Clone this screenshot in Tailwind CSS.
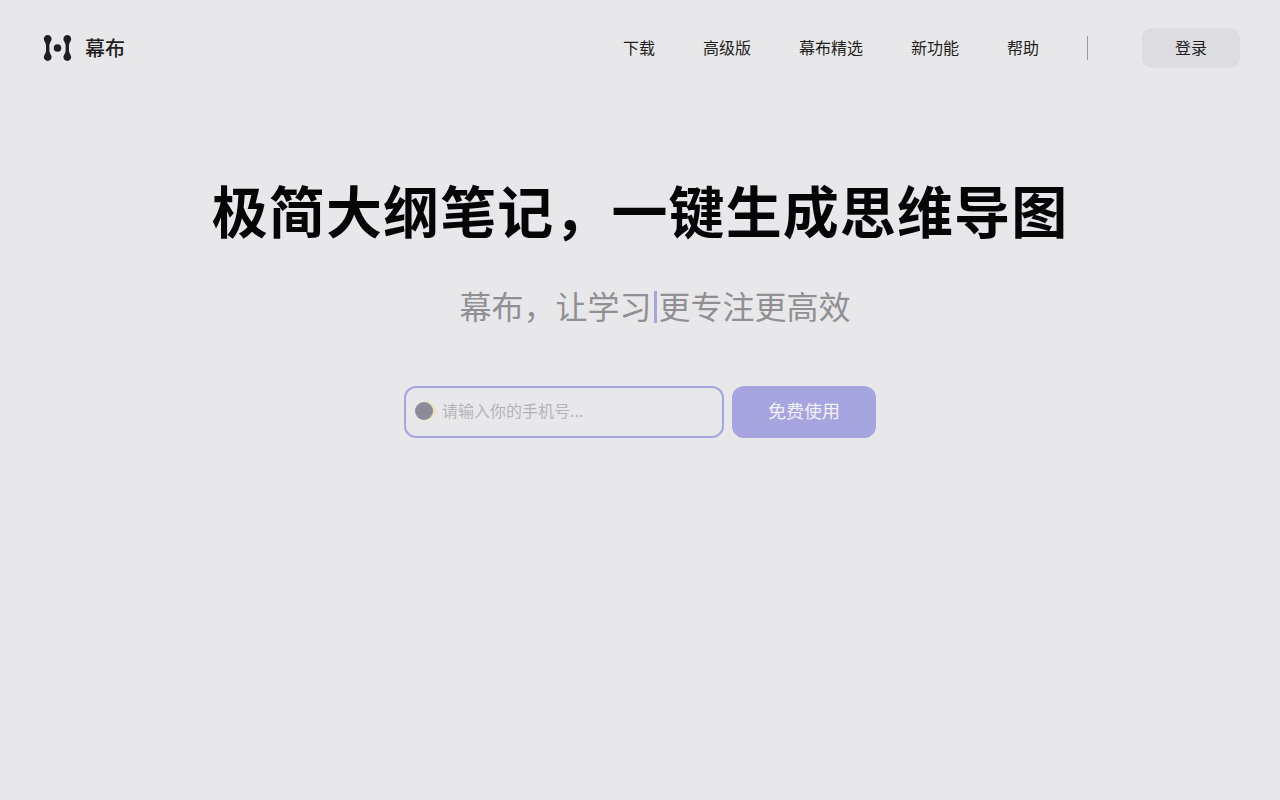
<!DOCTYPE html>
<html lang="zh">
<head>
    <meta charset="UTF-8">
    <title>幕布</title>
    <script src="https://cdn.jsdelivr.net/npm/@tailwindcss/browser@4"></script>
</head>
<body class="bg-[#e8e8ea] h-[800px] overflow-hidden font-['Noto_Sans_CJK_SC','Noto_Sans',sans-serif]">
    <!-- 顶部导航 -->
    <header class="h-[96px] pl-[43px] pr-[40px] flex items-center justify-between">
        <div class="flex items-center gap-[13px]">
            <svg width="29" height="28" viewBox="0 0 29 28" fill="#1f1f21">
                <path d="M4.7 1C7 1 8.6 2.8 8.6 4.9C8.6 6.8 6.6 8.6 6.4 11V17C6.6 19.4 8.6 21.2 8.6 23.1C8.6 25.2 7 27 4.7 27C2.4 27 .8 25.2 .8 23.1C.8 21.2 2.8 19.4 3 17V11C2.8 8.6 .8 6.8 .8 4.9C.8 2.8 2.4 1 4.7 1Z"/>
                <circle cx="14.5" cy="14" r="3.8"/>
                <path d="M24.3 1C26.6 1 28.2 2.8 28.2 4.9C28.2 6.8 26.2 8.6 26 11V17C26.2 19.4 28.2 21.2 28.2 23.1C28.2 25.2 26.6 27 24.3 27C22 27 20.4 25.2 20.4 23.1C20.4 21.2 22.4 19.4 22.6 17V11C22.4 8.6 20.4 6.8 20.4 4.9C20.4 2.8 22 1 24.3 1Z"/>
            </svg>
            <span class="text-[20px] leading-[28px] font-medium text-[#1f1f21]">幕布</span>
        </div>
        <nav class="flex items-center text-[16px] leading-[22px] text-[#1f1f21]">
            <a class="mr-[48px] -translate-y-px">下载</a>
            <a class="mr-[48px] -translate-y-px">高级版</a>
            <a class="mr-[48px] -translate-y-px">幕布精选</a>
            <a class="mr-[48px] -translate-y-px">新功能</a>
            <a class="mr-[48px] -translate-y-px">帮助</a>
            <div class="w-px h-[24px] bg-[#9a9a9e] mr-[54px]"></div>
            <button class="w-[98px] h-[40px] rounded-[10px] bg-[#dcdce1] text-[16px] text-[#1f1f21]"><span class="block -translate-y-px">登录</span></button>
        </nav>
    </header>

    <!-- 主标题 -->
    <main class="flex flex-col items-center">
        <h1 class="mt-[75px] text-[56px] leading-[76px] tracking-[1.1px] font-bold text-[#050505]">极简大纲笔记，一键生成思维导图</h1>
        <div class="mt-[35px] ml-[30px] flex items-center text-[32px] leading-[46px] text-[#909094]">
            <span>幕布，让学习</span>
            <span class="w-[3px] h-[32px] mx-[2px] mt-[4px] bg-[#a7a5e0]"></span>
            <span>更专注更高效</span>
        </div>
        <div class="mt-[58px] flex gap-[8px]">
            <div class="w-[320px] h-[52px] rounded-[12px] border-2 border-[#a7a5e0] pl-[9px] flex items-center gap-[9px]">
                <div class="w-[18px] h-[18px] rounded-full bg-[#8b8b99] shadow-[2px_0_3px_#ecdfa0] blur-[0.5px] -translate-y-px"></div>
                <span class="text-[16px] text-[#b4b4b8] -translate-y-[2px]">请输入你的手机号...</span>
            </div>
            <button class="w-[144px] h-[52px] rounded-[12px] bg-[#a7a5e0] text-[18px] text-[#f0f0f6]"><span class="block -translate-y-[2px]">免费使用</span></button>
        </div>
    </main>
</body>
</html>
